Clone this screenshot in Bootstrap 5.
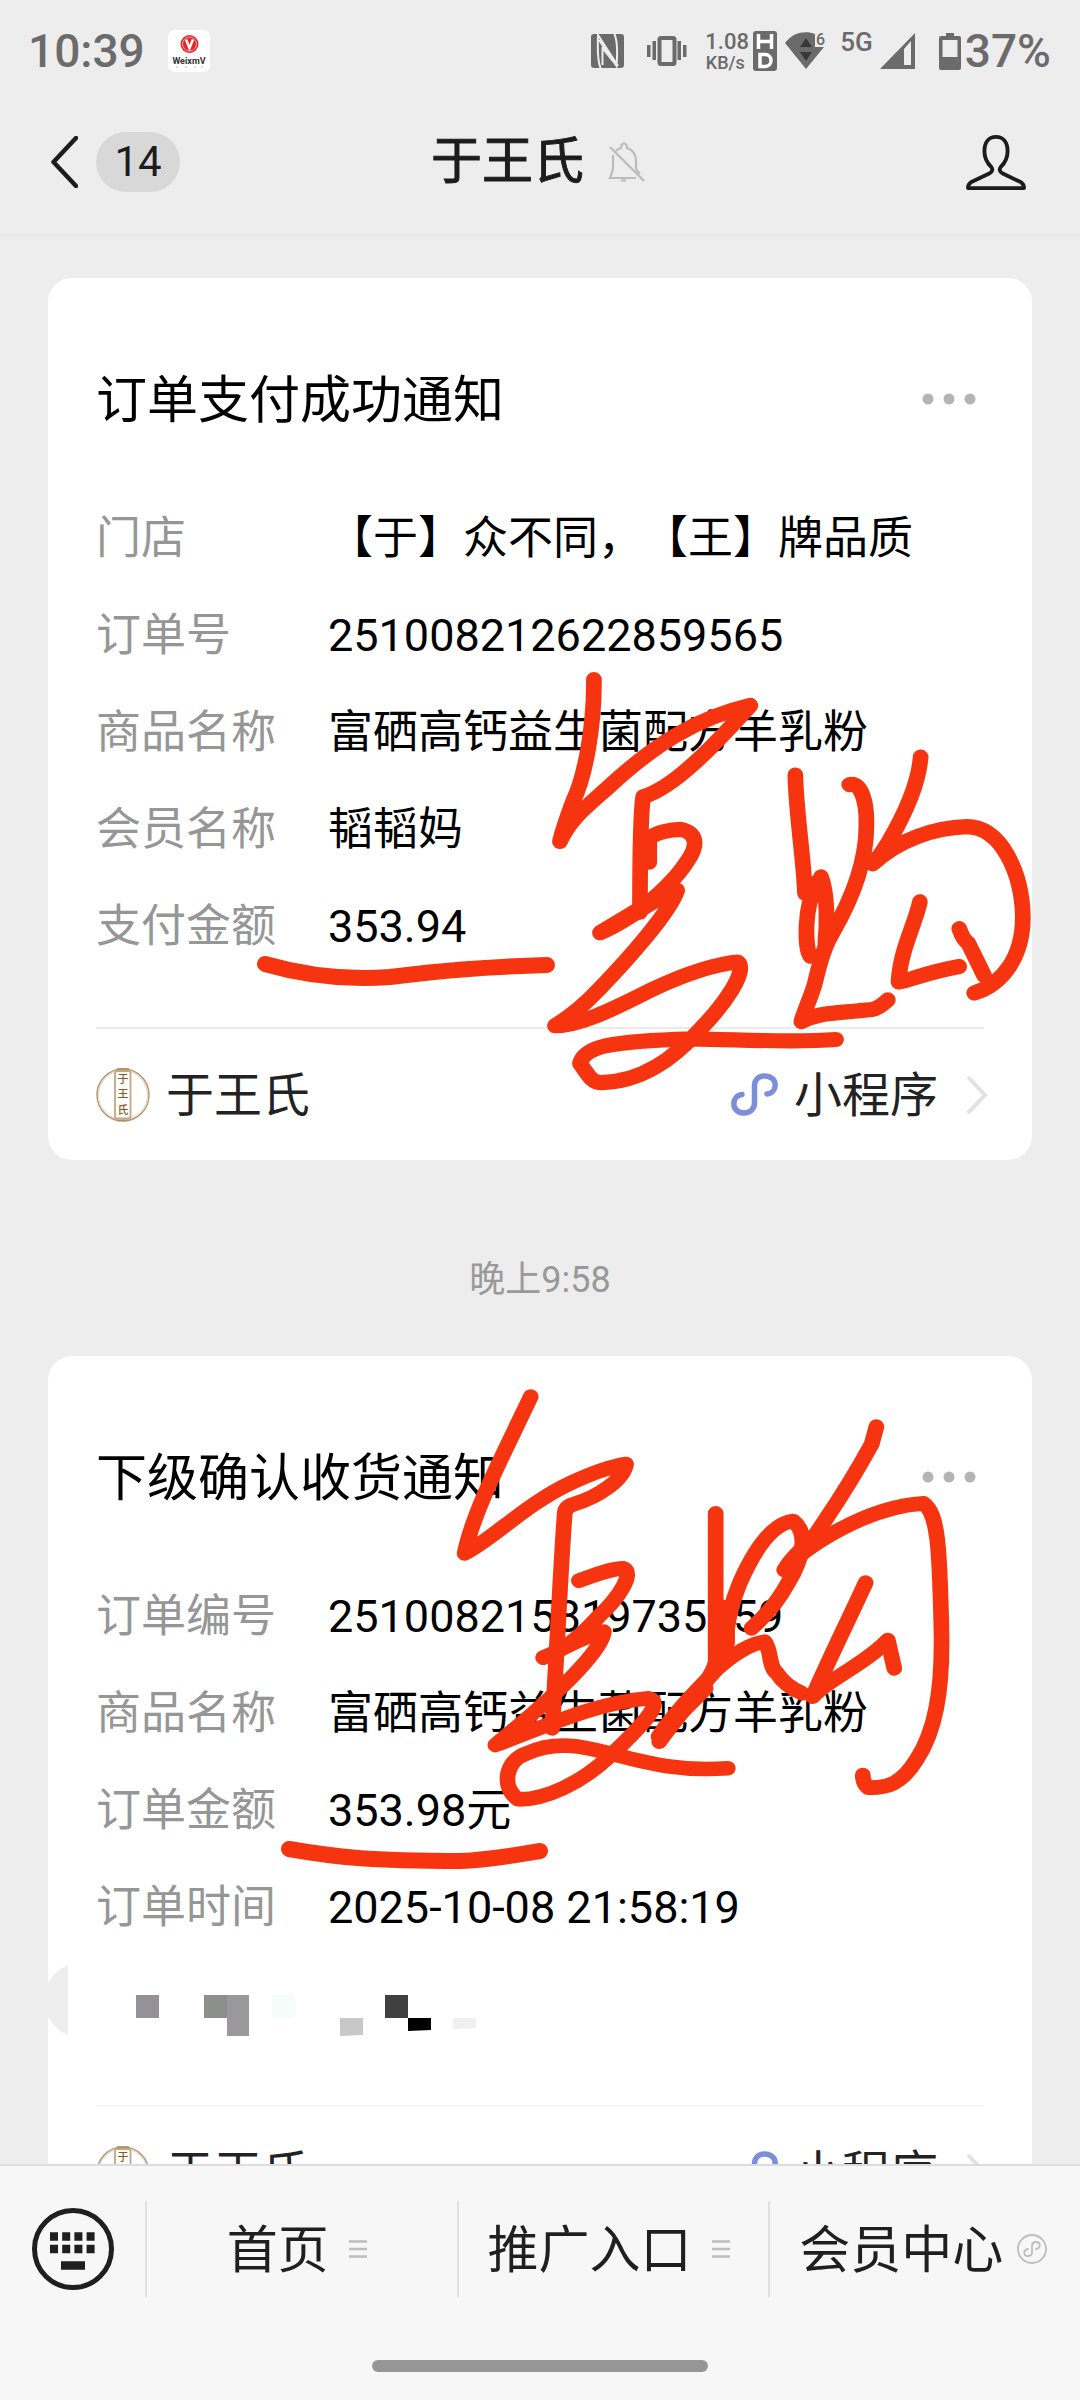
<!DOCTYPE html>
<html lang="zh-CN">
<head>
<meta charset="utf-8">
<meta name="viewport" content="width=device-width, initial-scale=1">
<title>于王氏</title>
<link href="https://cdn.jsdelivr.net/npm/bootstrap@5.3.0/dist/css/bootstrap.min.css" rel="stylesheet">
<style>
  body { background: #ededed; color: #000; font-family: Roboto, "Noto Sans CJK SC", sans-serif; }
  svg { display: block; flex: none; }
  .statusbar { height: 90px; padding: 12px 29px 0 28px; color: #6b6b6b; font-size: 46px; line-height: 78px; font-weight: 500; }
  .s-gap { margin-left: 23px; }
  .s-near { margin-left: 8px; }
  .net-speed { width: 40px; margin-left: 18px; font-size: 22px; line-height: 24px; }
  .net-unit { font-size: 18px; line-height: 18px; }
  .net-gen { margin: 0 7px 18px 12px; font-size: 26px; line-height: 28px; }
  .chat-head { height: 146px; border-bottom: 2px solid #e8e8e8; padding: 0 54px 0 51px; color: #1c1c1c; }
  .head-side { flex: 1 1 0; }
  .plain { background: none; border: 0; padding: 0; color: inherit; text-decoration: none; }
  .unread { width: 84px; height: 60px; background: #d8d8d8; font-size: 42px; line-height: 60px; margin-left: 18px; }
  .chat-name { font-size: 51px; line-height: 60px; font-weight: 400; -webkit-text-stroke: 1px currentColor; }
  .feed { padding: 42px 48px 0; min-height: 0; }
  .notice { background: #fff; border: 0; border-radius: 24px; padding: 83px 48px 0; }
  .notice-title { font-size: 51px; line-height: 72px; font-weight: 400; padding-top: 4px; }
  .more { margin-right: 6px; }
  .fields { margin: 53px 0 52px; font-size: 45px; line-height: 97px; text-spacing-trim: space-all; font-feature-settings: "chws" 0; }
  .fields dt { width: 232px; font-weight: 400; color: #969696; }
  .mosaic { height: 97px; }
  .notice-foot { border-top: 2px solid #ebebeb; height: 133px; font-size: 48px; line-height: 60px; color: #222; }
  .notice-foot.faint { border-color: #f5f5f5; }
  .foot-label { padding-top: 2px; margin-left: 16px; }
  .foot-next { margin: 0 -4px 0 28px; }
  .stamp { font-size: 36px; line-height: 54px; margin: 93px 0 49px; color: #999; }
  .ink { left: 0; top: 0; width: 100%; pointer-events: none; overflow: visible; z-index: 2; }
  .ink path { fill: none; stroke: #f63510; stroke-width: 44; stroke-linecap: round; stroke-linejoin: round; }
  .ink .pen { stroke-width: 16; }
  .notch { left: -4px; top: 609px; z-index: 1; }
  .dock { background: #f7f7f7; border-top: 2px solid #dcdcdc; color: #1f1f1f; padding-bottom: 28px; z-index: 3; }
  .dock-row { height: 166px; }
  .kb { width: 145px; }
  .rule { width: 2px; height: 96px; background: #e0e0e0; }
  .dock-link { flex: 1 1 0; gap: 14px; padding-right: 4px; font-size: 51px; line-height: 72px; }
  .dock-link span { padding-top: 4px; }
  .home-bar { width: 336px; height: 12px; background: #969696; margin: 28px auto 0; }
</style>
<script src="https://cdn.jsdelivr.net/npm/bootstrap@5.3.0/dist/js/bootstrap.bundle.min.js"></script>
</head>
<body>
<svg width="0" height="0" class="position-absolute" aria-hidden="true">
  <symbol id="mini" viewBox="0 0 47 43"><path d="M36 21C41 20.500 44.200 16.500 44.200 12C44.200 6.500 39.500 3 33.500 3C27.500 3 23.500 7 23.500 13V30C23.500 36 19 40 13 40C7 40 2.800 36 2.800 31C2.800 26 6 22 11 21.500" fill="none" stroke="currentColor" stroke-width="5.500" stroke-linecap="round"/></symbol>
  <symbol id="next" viewBox="0 0 22 40"><path d="M2 2L19 20L2 38" fill="none" stroke="#e2e2e2" stroke-width="4"/></symbol>
  <symbol id="dots" viewBox="0 0 56 14"><g fill="#b4b4b4"><circle cx="6" cy="7" r="5.500"/><circle cx="27" cy="7" r="5.500"/><circle cx="48" cy="7" r="5.500"/></g></symbol>
  <symbol id="bars" viewBox="0 0 30 30"><path d="M6 7.500h18M6 15h18M6 22.500h18" stroke="#bdbdbd" stroke-width="2.500"/></symbol>
</svg>

<div class="vh-100 d-flex flex-column overflow-hidden">
  <div class="statusbar d-flex align-items-center flex-shrink-0">
    <span>10:39</span>
    <svg class="s-gap" width="42" height="42" viewBox="0 0 42 42"><rect width="42" height="42" rx="7" fill="#fff"/><circle cx="21.500" cy="14" r="9" fill="#e5262a"/><circle cx="21.500" cy="14" r="7" fill="none" stroke="#f7a9a9" stroke-width="1"/><path d="M18 9.500L21.500 18L25 9.500" fill="none" stroke="#fff" stroke-width="2.500"/><text x="21" y="34" font-size="9" font-weight="700" text-anchor="middle" fill="#333">WeixmV</text><path d="M8 37h2M17 37h2M26 37h2M33 37h2" stroke="#bbb"/></svg>
    <svg class="ms-auto" width="33" height="34" viewBox="0 0 33 34"><rect width="33" height="34" rx="3" fill="#6b6b6b"/><path d="M10 35C6.500 29 6.500 15 7 1L27 32M23 -1C26.500 6 26.500 20 25.500 32L8 6M11.500 13V31M11.500 14L22 27" fill="none" stroke="#ededed" stroke-width="2"/></svg>
    <svg class="s-gap" width="40" height="30" viewBox="0 0 40 30"><g fill="#6b6b6b"><rect y="9" width="3.500" height="12"/><rect x="5.500" y="5" width="3.500" height="19"/><rect x="30.500" y="5" width="3.500" height="19"/><rect x="36" y="9" width="3.500" height="12"/></g><rect x="12.500" y="2" width="15" height="26" rx="1.500" fill="none" stroke="#6b6b6b" stroke-width="4"/></svg>
    <span class="net-speed text-center"><span class="d-block">1.08</span><span class="d-block net-unit">KB/s</span></span>
    <svg class="s-near" width="24" height="40" viewBox="0 0 24 40"><rect width="24" height="40" rx="3" fill="#6b6b6b"/><path d="M5.500 3V18M18.500 3V18M5.500 10.500H18.500M7 23.500V35.500H12C20 35.500 20 23.500 12 23.500Z" fill="none" stroke="#fff" stroke-width="3.500"/></svg>
    <svg class="s-near" width="43" height="38" viewBox="0 0 43 38"><path d="M0 11C9 -1 22 -1 30 2V15H39L21 37Z" fill="#6b6b6b"/><path d="M15 15L21 6L27 15ZM15 20H27L21 29Z" fill="#383838"/><text x="31" y="13" font-size="16" font-weight="500" fill="#6b6b6b">6</text></svg>
    <span class="net-gen">5G</span>
    <svg width="36" height="36" viewBox="0 0 36 36"><path d="M0 36L35 0V36ZM24 16V32H31V8Z" fill="#6b6b6b" fill-rule="evenodd"/></svg>
    <svg class="s-gap" width="22" height="37" viewBox="0 0 22 37"><path d="M7 0H15V3H20Q22 3 22 5V35Q22 37 20 37H2Q0 37 0 35V5Q0 3 2 3H7ZM3.500 7V24H18.500V7Z" fill="#6b6b6b" fill-rule="evenodd"/></svg>
    <span class="ms-1">37%</span>
  </div>

  <header class="chat-head d-flex align-items-center flex-shrink-0">
    <div class="head-side d-flex align-items-center">
      <button class="plain" type="button" aria-label="返回"><svg width="27" height="52" viewBox="0 0 27 52"><path d="M25 2L2.500 26L25 50" fill="none" stroke="#1c1c1c" stroke-width="4.500" stroke-linejoin="round" stroke-linecap="round"/></svg></button>
      <span class="unread rounded-pill text-center">14</span>
    </div>
    <div class="d-flex align-items-center">
      <h1 class="chat-name m-0">于王氏</h1>
      <svg class="ms-4" width="38" height="40" viewBox="0 0 38 40"><path d="M8 9C10 7 12 6.500 13 6C13 0 19 0 19 6C25 8 28 12 28 19V27L32 32M5 13V26Q4 31 2 36H28M13 38.500H18M2 5L36 39" fill="none" stroke="#bcbcbc" stroke-width="2.200"/></svg>
    </div>
    <div class="head-side d-flex justify-content-end">
      <button class="plain" type="button" aria-label="资料"><svg width="60" height="56" viewBox="0 0 62 58"><path d="M31 3C23 3 19 9 19 18C19 25 22 30 26 34Q29 38 24 41L5 50Q2 52 2 56H60Q60 52 57 50L38 41Q33 38 36 34C40 30 43 25 43 18C43 9 39 3 31 3Z" fill="none" stroke="#1c1c1c" stroke-width="4" stroke-linejoin="round"/></svg></button>
    </div>
  </header>

  <main class="feed flex-grow-1 overflow-hidden">
    <article class="notice position-relative">
      <div class="d-flex align-items-center justify-content-between">
        <h2 class="notice-title m-0">订单支付成功通知</h2>
        <button class="plain more" type="button" aria-label="更多"><svg width="56" height="14"><use href="#dots"/></svg></button>
      </div>
      <dl class="fields">
        <div class="d-flex"><dt>门店</dt><dd class="m-0">【于】众不同，<span class="d-inline-block">【王】牌品质</span></dd></div>
        <div class="d-flex"><dt>订单号</dt><dd class="m-0">251008212622859565</dd></div>
        <div class="d-flex"><dt>商品名称</dt><dd class="m-0">富硒高钙益生菌配方羊乳粉</dd></div>
        <div class="d-flex"><dt>会员名称</dt><dd class="m-0">韬韬妈</dd></div>
        <div class="d-flex"><dt>支付金额</dt><dd class="m-0">353.94</dd></div>
      </dl>
      <a href="#" class="notice-foot d-flex align-items-center text-decoration-none">
        <svg width="54" height="54" viewBox="0 0 54 54"><circle cx="27" cy="27" r="26" fill="#fff" stroke="#b79b7c" stroke-width="1.500"/><circle cx="27" cy="27" r="24.500" fill="none" stroke="#e0d3c2"/><rect x="19" y="3" width="15.500" height="47.500" rx="2" fill="#fff" stroke="#c4a67f" stroke-width="1.800"/><path d="M21 1h12M21 52.500h12" stroke="#b08c5f" stroke-width="1.500"/><g font-size="11" font-weight="500" fill="#8a5a20" text-anchor="middle"><text x="27" y="15">于</text><text x="27" y="30">王</text><text x="27" y="46">氏</text></g></svg>
        <span class="foot-label me-auto">于王氏</span>
        <svg width="47" height="43" color="#7c8edb"><use href="#mini"/></svg>
        <span class="foot-label">小程序</span>
        <svg class="foot-next" width="22" height="40"><use href="#next"/></svg>
      </a>
      <svg class="ink position-absolute" viewBox="48 278 984 882" aria-hidden="true">
        <path class="pen" d="M265 964C310 977 350 980 390 977C440 971 480 967 547 965"/>
        <g transform="translate(520 640) scale(.3571 .3444)">
          <path d="M207 115C208 260 180 400 150 465C130 520 120 550 112 585C140 520 180 490 250 425C380 300 500 225 645 190C540 310 430 430 345 455C338 500 336 700 336 790"/>
          <path d="M362 645V575C380 560 420 550 450 550C495 560 500 595 470 640C440 690 380 750 336 780L224 850C300 820 370 750 440 727C420 790 300 930 225 1010C180 1060 130 1100 98 1120C180 1120 300 1050 370 1015C460 970 550 940 610 935C640 960 570 1060 505 1130C430 1215 340 1285 225 1285C200 1285 190 1260 168 1230C180 1180 250 1165 480 1158C620 1160 760 1170 885 1160"/>
          <path d="M771 392C773 500 795 640 798 735M843 688C862 740 860 830 855 880M835 700C790 780 800 900 813 918"/>
          <path d="M922 420C955 410 972 470 970 540C970 650 925 760 875 850C845 900 835 960 825 1000C810 1050 795 1080 788 1108C840 1080 880 1085 985 1073Q1005 1070 1030 1045"/>
          <path d="M1122 340C1115 430 1070 520 1030 590Q1010 625 988 650C1060 580 1160 545 1250 542C1350 542 1405 680 1408 800C1410 920 1350 1000 1272 1025"/>
          <path d="M1120 760C1105 830 1065 900 1060 993C1100 985 1140 965 1230 948M1230 838Q1240 870 1255 880L1300 975"/>
        </g>
      </svg>
    </article>

    <div class="stamp text-center">晚上9:58</div>

    <article class="notice position-relative">
      <svg class="notch position-absolute" width="24" height="70" viewBox="0 0 24 70" aria-hidden="true"><path d="M24 0C-8 14 -8 56 24 70Z" fill="#eee"/></svg>
      <div class="d-flex align-items-center justify-content-between">
        <h2 class="notice-title m-0">下级确认收货通知</h2>
        <button class="plain more" type="button" aria-label="更多"><svg width="56" height="14"><use href="#dots"/></svg></button>
      </div>
      <dl class="fields">
        <div class="d-flex"><dt>订单编号</dt><dd class="m-0">251008215819735959</dd></div>
        <div class="d-flex"><dt>商品名称</dt><dd class="m-0">富硒高钙益生菌配方羊乳粉</dd></div>
        <div class="d-flex"><dt>订单金额</dt><dd class="m-0">353.98元</dd></div>
        <div class="d-flex"><dt>订单时间</dt><dd class="m-0">2025-10-08 21:58:19</dd></div>
        <div class="mosaic d-flex align-items-center">
          <svg width="400" height="96" viewBox="96 1956 400 96" aria-hidden="true"><path fill="#959297" d="M136 1994h23v23h-23z"/><path fill="#8c8f8a" d="M204 1994h23v23h-23z"/><path fill="#9b989b" d="M227 1994h22v41h-22z"/><path fill="#f6fcf9" d="M272 1994h23v23h-23z"/><path fill="#c8c8c8" d="M340 2017h23v17l-23 1z"/><path fill="#404040" d="M385 1994h23v23h-23z"/><path d="M408 2017h23v12l-23 1z"/><path fill="#f0f0f0" d="M453 2017h23v10l-23 1z"/></svg>
        </div>
      </dl>
      <a href="#" class="notice-foot faint d-flex align-items-center text-decoration-none">
        <svg width="54" height="54" viewBox="0 0 54 54"><circle cx="27" cy="27" r="26" fill="#fff" stroke="#b79b7c" stroke-width="1.500"/><circle cx="27" cy="27" r="24.500" fill="none" stroke="#e0d3c2"/><rect x="19" y="3" width="15.500" height="47.500" rx="2" fill="#fff" stroke="#c4a67f" stroke-width="1.800"/><path d="M21 1h12M21 52.500h12" stroke="#b08c5f" stroke-width="1.500"/><g font-size="11" font-weight="500" fill="#8a5a20" text-anchor="middle"><text x="27" y="15">于</text></g></svg>
        <span class="foot-label me-auto">于王氏</span>
        <svg width="47" height="43" color="#7c8edb"><use href="#mini"/></svg>
        <span class="foot-label">小程序</span>
        <svg class="foot-next" width="22" height="40"><use href="#next"/></svg>
      </a>
      <svg class="ink position-absolute" viewBox="48 1356 984 882" aria-hidden="true">
        <path class="pen" d="M289 1849C335 1857 370 1861 460 1861C490 1860 515 1855 540 1851"/>
        <g transform="translate(420 1360) scale(.3571 .3333)">
          <path d="M310 110C240 270 150 450 125 580C200 540 300 430 420 370C480 340 530 320 577 312C570 360 500 410 430 433Q405 440 405 465C395 600 385 850 370 1105"/>
          <path d="M445 662C500 640 540 625 570 625C600 640 560 710 500 770C440 840 400 870 345 893C400 870 450 830 515 815C510 870 400 990 211 1155C330 1110 480 1030 640 1015C680 1025 640 1080 530 1190C450 1270 350 1320 275 1318C225 1280 240 1200 300 1180C380 1140 460 1160 530 1180C640 1210 720 1235 862 1225"/>
          <path d="M828 460V905C820 960 740 1040 670 1145M668 1130C730 1030 790 980 828 930M800 985L675 1120M848 890C860 820 860 760 895 670C940 560 990 490 1045 483C1090 520 1070 600 1030 670C1000 730 960 775 928 805M845 740V880M860 760V850"/>
          <path d="M828 930C890 870 930 850 965 845C985 870 975 920 1000 940Q1020 975 1070 1000"/>
          <path d="M1278 200L1265 252C1200 380 1160 440 1110 520C1070 570 1040 590 1020 630C1080 560 1250 440 1410 430C1450 460 1455 560 1460 800C1465 1000 1440 1120 1390 1200C1350 1270 1310 1285 1255 1283Q1240 1270 1240 1245"/>
          <path d="M1248 668C1200 780 1140 910 1100 1010C1140 960 1250 910 1310 840L1328 925"/>
        </g>
      </svg>
    </article>
  </main>

  <nav class="dock flex-shrink-0">
    <div class="dock-row d-flex align-items-center">
      <button class="plain kb d-flex justify-content-center" type="button" aria-label="键盘"><svg width="82" height="84" viewBox="0 0 82 84"><circle cx="41" cy="42" r="38.500" fill="none" stroke="#1f1f1f" stroke-width="5"/><path d="M18 29.500h46M18 42h46" stroke="#1f1f1f" stroke-width="8.500" stroke-dasharray="8 4.200"/><path d="M29 58.500h24" stroke="#1f1f1f" stroke-width="8.500"/></svg></button>
      <span class="rule"></span>
      <a class="plain dock-link d-flex align-items-center justify-content-center" href="#"><span>首页</span><svg width="30" height="30"><use href="#bars"/></svg></a>
      <span class="rule"></span>
      <a class="plain dock-link d-flex align-items-center justify-content-center" href="#"><span>推广入口</span><svg width="30" height="30"><use href="#bars"/></svg></a>
      <span class="rule"></span>
      <a class="plain dock-link d-flex align-items-center justify-content-center" href="#"><span>会员中心</span><svg width="30" height="30" viewBox="0 0 30 30"><circle cx="15" cy="15" r="14" fill="none" stroke="#bdbdbd" stroke-width="1.800"/><path d="M19 15C24 14 24 8 19 8C16.500 8 15 9.500 15 12V18C15 20.500 13.500 22 11 22C6 22 6 16 11 15" fill="none" stroke="#bdbdbd" stroke-width="1.800" stroke-linecap="round"/></svg></a>
    </div>
    <div class="home-bar rounded-pill"></div>
  </nav>
</div>
</body>
</html>
